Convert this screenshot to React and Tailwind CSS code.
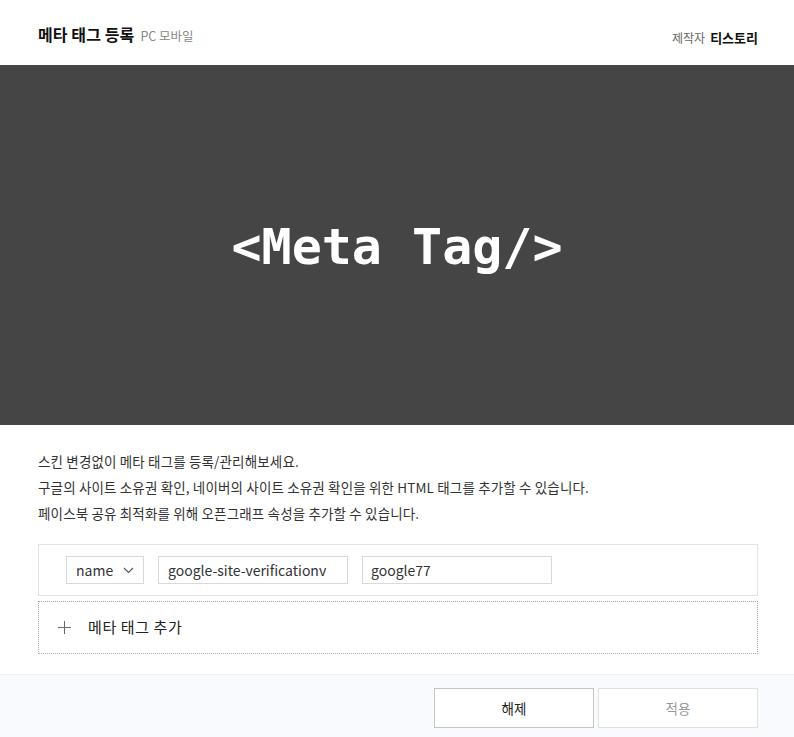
export default function App() {
  const kr = { fontFamily: '"Noto Sans CJK KR", "Noto Sans", sans-serif' };
  return (
    <div className="w-[794px] h-[737px] bg-white flex flex-col text-[#333]" style={kr}>
      <div className="h-[65px] flex items-center justify-between pl-[38px] pr-[36px] pt-[2px]">
        <div className="flex items-baseline gap-[6px]">
          <span className="text-[16px] font-bold text-[#111] tracking-[0.1px]">메타 태그 등록</span>
          <span className="text-[12.5px] text-[#888]">PC 모바일</span>
        </div>
        <div className="flex items-baseline gap-[5px] pt-[8px]">
          <span className="text-[12px] text-[#666]">제작자</span>
          <span className="text-[13px] font-bold text-[#111]">티스토리</span>
        </div>
      </div>
      <div className="h-[360px] bg-[#454545] flex items-center justify-center">
        <span
          className="text-[50px] font-bold text-white leading-none pt-[4px]"
          style={{ fontFamily: '"DejaVu Sans Mono", monospace' }}
        >
          {"<Meta Tag/>"}
        </span>
      </div>
      <div className="px-[38px] pt-[23px] text-[13.5px] tracking-[0.15px] leading-[26px] text-[#333]">
        <p>스킨 변경없이 메타 태그를 등록/관리해보세요.</p>
        <p>구글의 사이트 소유권 확인, 네이버의 사이트 소유권 확인을 위한 HTML 태그를 추가할 수 있습니다.</p>
        <p>페이스북 공유 최적화를 위해 오픈그래프 속성을 추가할 수 있습니다.</p>
      </div>
      <div className="ml-[38px] mr-[36px] mt-[18px] h-[52px] border border-[#e3e3e3] flex items-center pl-[27px] gap-[14px]">
        <div className="w-[78px] h-[28px] border border-[#d9d9d9] flex items-center pl-[9px] gap-[10px] text-[14px] text-[#333]">
          <span>name</span>
          <svg width="11" height="7" viewBox="0 0 11 7" fill="none" stroke="#555" strokeWidth="1.1">
            <path d="M1 1 L5.5 5.5 L10 1" />
          </svg>
        </div>
        <div className="w-[190px] h-[28px] border border-[#d9d9d9] flex items-center px-[9px] text-[14px] text-[#333]">
          google-site-verificationv
        </div>
        <div className="w-[190px] h-[28px] border border-[#d9d9d9] flex items-center px-[8px] text-[14px] text-[#333]">
          google77
        </div>
      </div>
      <div className="ml-[38px] mr-[36px] mt-[5px] h-[53px] border border-dotted border-[#aaa] flex items-center pl-[19px] gap-[17px]">
        <svg width="13" height="13" viewBox="0 0 13 13" stroke="#666" strokeWidth="1">
          <path d="M6.5 0 V13 M0 6.5 H13" />
        </svg>
        <span className="text-[15px] tracking-[0.6px] text-[#222]">메타 태그 추가</span>
      </div>
      <div className="mt-[20px] flex-1 bg-[#f8fafd] border-t border-[#eef0f4] flex justify-end items-start pt-[13px] pr-[36px] gap-[4px]">
        <button className="w-[160px] h-[40px] bg-white border border-[#c5c5c5] text-[13.5px] text-[#222]">해제</button>
        <button className="w-[160px] h-[40px] bg-white border border-[#e0e0e0] text-[13.5px] text-[#999]">적용</button>
      </div>
    </div>
  );
}
